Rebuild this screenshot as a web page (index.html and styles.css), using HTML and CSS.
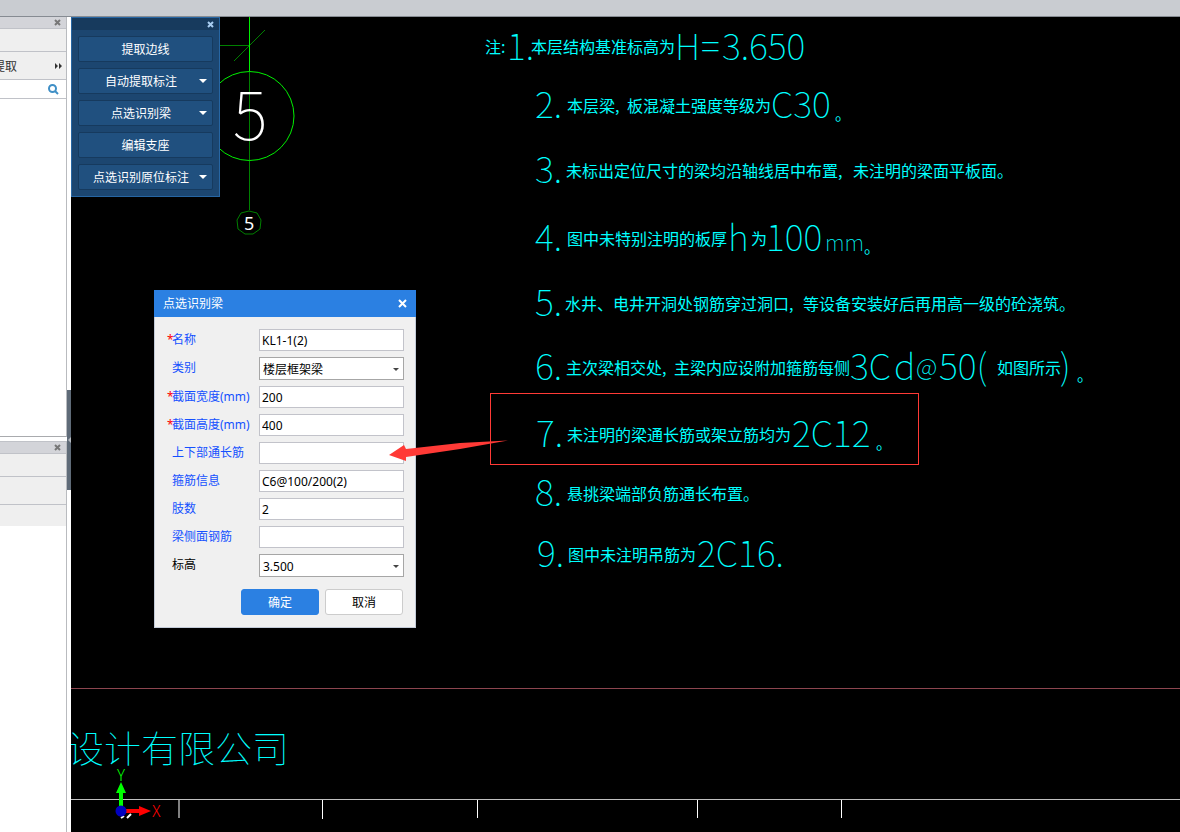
FILE: index.html
```html
<!DOCTYPE html>
<html lang="zh-CN">
<head>
<meta charset="utf-8">
<title>点选识别梁</title>
<link rel="stylesheet" href="styles.css">
</head>
<body>
<div class="app">
  <header class="titlebar"></header>
  <main class="workspace">
    <aside class="sidebar">
      <section class="dock dock-main">
        <div class="dock-head">
          <button class="icon-btn" aria-label="关闭"><svg class="x-icon" viewBox="0 0 7 7"><path d="M1 1 6 6M6 1 1 6"/></svg></button>
        </div>
        <div class="dock-row"></div>
        <div class="dock-row dock-tools">
          <span class="dock-text">提取</span>
          <button class="icon-btn more" aria-label="更多"><svg class="more-icon" viewBox="0 0 8 6"><path d="M0 0 3 3 0 6zM4 0 7 3 4 6z"/></svg></button>
        </div>
        <div class="dock-search">
          <button class="icon-btn" aria-label="搜索"><svg class="search-icon" viewBox="0 0 11 11"><circle cx="4.5" cy="4.5" r="3.5"/><path d="M7 7 10 10"/></svg></button>
        </div>
      </section>
      <section class="dock dock-sub">
        <div class="dock-head">
          <button class="icon-btn" aria-label="关闭"><svg class="x-icon" viewBox="0 0 7 7"><path d="M1 1 6 6M6 1 1 6"/></svg></button>
        </div>
        <div class="dock-row"></div>
        <div class="dock-row dock-tools"></div>
        <div class="dock-row dock-last"></div>
      </section>
      <div class="splitter"><svg class="grip" viewBox="0 0 3 6"><path d="M3 0 0 3 3 6z"/></svg></div>
    </aside>

    <div class="canvas">
      <svg class="drawing">
        <g transform="translate(-71 -17)">
          <g class="axis-dark">
            <path d="M219 45.500H249M234 61 265 30M249.500 71V210"/>
            <path d="M249 211 257 213 261 220 260 229 253 234 245 234 238 229 237 220 241 213z"/>
          </g>
          <g class="axis-bright">
            <path d="M249.500 17V71"/>
            <circle cx="249.500" cy="116" r="44.500"/>
          </g>
          <text class="mark-big" x="233" y="140">5</text>
          <text class="mark-small" x="244" y="230">5</text>

          <g class="cjk">
            <text x="485" y="53">注</text>
            <text x="501" y="53">:</text>
            <text x="531" y="53">本层结构基准标高为</text>
            <text x="567" y="112">本层梁,</text>
            <text x="627" y="112">板混凝土强度等级为</text>
            <text x="835" y="120">。</text>
            <text x="566" y="177">未标出定位尺寸的梁均沿轴线居中布置,</text>
            <text x="853" y="177">未注明的梁面平板面。</text>
            <text x="567" y="245">图中未特别注明的板厚</text>
            <text x="751" y="245">为</text>
            <text x="864" y="253">。</text>
            <text x="565" y="310">水井、电井开洞处钢筋穿过洞口,</text>
            <text x="803" y="310">等设备安装好后再用高一级的砼浇筑。</text>
            <text x="566" y="374">主次梁相交处,</text>
            <text x="674" y="374">主梁内应设附加箍筋每侧</text>
            <text x="997" y="374">如图所示</text>
            <text x="1077" y="381">。</text>
            <text x="567" y="441">未注明的梁通长筋或架立筋均为</text>
            <text x="876" y="449">。</text>
            <text x="567" y="500">悬挑梁端部负筋通长布置。</text>
            <text x="568" y="561">图中未注明吊筋为</text>
          </g>
          <g class="latin">
            <text x="507" y="60">1.</text>
            <text x="675" y="60">H</text>
            <text x="701" y="60">=</text>
            <text x="722" y="60">3.650</text>
            <text x="535" y="118">2.</text>
            <text x="771" y="118">C30</text>
            <text x="535" y="183">3.</text>
            <text x="535" y="251">4.</text>
            <text x="728" y="251">h</text>
            <text x="766" y="251">100</text>
            <text class="lower" x="825" y="251">mm</text>
            <text x="535" y="316">5.</text>
            <text x="535" y="380">6.</text>
            <text x="850" y="380">3C</text>
            <text x="894" y="380">d</text>
            <text class="at" x="916" y="376">@</text>
            <text x="939" y="380">50(</text>
            <text x="1060" y="380">)</text>
            <text x="536" y="447">7.</text>
            <text x="792" y="447">2C12</text>
            <text x="535" y="506">8.</text>
            <text x="537" y="567">9.</text>
            <text x="697" y="567">2C16.</text>
          </g>
          <text class="company" x="67" y="763">设计有限公司</text>

          <path class="red-dim" d="M71 688.500H4000"/>
          <path class="frame" d="M71 799.500H4000"/>
          <path class="tick-dim" d="M179 800V818"/>
          <path class="tick" d="M322.500 800V819M477.500 800V818M697.500 800V818M841.500 800V818"/>
          <path class="tick-bits" d="M121 818 124 816M127 818 131 814"/>
          <path class="arrow-y" d="M119 806V793H116L121 782 126 793H123V806z"/>
          <path class="arrow-x" d="M125 809H139V806L151 811 139 816V813H125z"/>
          <circle class="origin" cx="121" cy="811" r="5.500"/>
          <text class="label-y" x="117" y="781">Y</text>
          <text class="label-x" x="152" y="817">X</text>
        </g>
      </svg>

      <section class="palette">
        <div class="palette-head">
          <button class="icon-btn" aria-label="关闭"><svg class="x-icon" viewBox="0 0 7 7"><path d="M1 1 6 6M6 1 1 6"/></svg></button>
        </div>
        <div class="palette-body">
          <button class="tool">提取边线</button>
          <button class="tool tool-menu">自动提取标注</button>
          <button class="tool tool-menu">点选识别梁</button>
          <button class="tool">编辑支座</button>
          <button class="tool tool-menu">点选识别原位标注</button>
        </div>
      </section>

      <form class="dialog" onsubmit="return false">
        <div class="dialog-head">
          <span>点选识别梁</span>
          <button type="button" class="icon-btn" aria-label="关闭"><svg class="close-icon" viewBox="0 0 9 9"><path d="M1 1 8 8M8 1 1 8"/></svg></button>
        </div>
        <div class="fields">
          <label for="f-name"><span class="req">*</span>名称</label>
          <input id="f-name" type="text" value="KL1-1(2)">
          <label for="f-type"><span class="req"></span>类别</label>
          <div class="select-box"><select id="f-type"><option>楼层框架梁</option></select></div>
          <label for="f-width"><span class="req">*</span>截面宽度(mm)</label>
          <input id="f-width" type="text" value="200">
          <label for="f-height"><span class="req">*</span>截面高度(mm)</label>
          <input id="f-height" type="text" value="400">
          <label for="f-through"><span class="req"></span>上下部通长筋</label>
          <input id="f-through" type="text">
          <label for="f-stirrup"><span class="req"></span>箍筋信息</label>
          <input id="f-stirrup" type="text" value="C6@100/200(2)">
          <label for="f-legs"><span class="req"></span>肢数</label>
          <input id="f-legs" type="text" value="2">
          <label for="f-side"><span class="req"></span>梁侧面钢筋</label>
          <input id="f-side" type="text">
          <label class="plain" for="f-level"><span class="req"></span>标高</label>
          <div class="select-box"><select id="f-level"><option>3.500</option></select></div>
        </div>
        <div class="actions">
          <button type="submit" class="btn btn-primary">确定</button>
          <button type="button" class="btn">取消</button>
        </div>
      </form>

      <svg class="markup">
        <g transform="translate(-71 -17)">
          <rect x="490.500" y="393.500" width="428" height="71"/>
          <path d="M389 455 404 445 406 449 460 443 508 440.500 460 449 406 457 406 461z"/>
        </g>
      </svg>
    </div>
  </main>
</div>
</body>
</html>
```
FILE: styles.css
```css
* { box-sizing: border-box; }

body {
  margin: 0;
  font: 12px/16px "Noto Sans", "Noto Sans CJK SC", sans-serif;
  color: #000;
}

button, input, select { font: inherit; color: inherit; }

.app {
  display: flex;
  flex-direction: column;
  height: 100vh;
  background: #fff;
}

.titlebar {
  flex: none;
  height: 17px;
  background: #c9ccd1;
  border-bottom: 1px solid #868b92;
}

.workspace { flex: 1; display: flex; min-height: 0; }

/* Left docks */
.sidebar {
  position: relative;
  flex: none;
  display: flex;
  flex-direction: column;
  gap: 4px;
  width: 71px;
  padding-right: 4px;
}

.dock { border-right: 1px solid #b9bbbf; }
.dock-main { height: 420px; border-bottom: 1px solid #a9abae; }
.dock-sub { flex: 1; border-top: 1px solid #c0c2c8; }

.dock-head {
  display: flex;
  align-items: center;
  justify-content: flex-end;
  height: 12px;
  padding-right: 5px;
  background: #d3d4d9;
  border-bottom: 1px solid #c0c2c8;
}

.dock-row {
  display: flex;
  align-items: center;
  justify-content: space-between;
  height: 23px;
  background: #efefef;
  border-bottom: 1px solid #c0c2c8;
}
.dock-tools { height: 28px; padding-right: 3px; }
.dock-last { height: 21px; border-bottom: 0; }

.dock-text {
  display: flex;
  justify-content: flex-end;
  width: 17px;
  padding-top: 2px;
  overflow: hidden;
  white-space: nowrap;
  color: #333;
}

.dock-search {
  display: flex;
  align-items: center;
  justify-content: flex-end;
  height: 19px;
  padding-right: 7px;
  border-bottom: 1px solid #c0c2c8;
}

.icon-btn {
  display: flex;
  padding: 0;
  border: 0;
  background: none;
}

.x-icon { width: 7px; height: 7px; fill: none; stroke: #777; stroke-width: 2; }
.more-icon { width: 8px; height: 6px; fill: #333; }
.search-icon { width: 11px; height: 11px; fill: none; stroke: #3f8fc6; stroke-width: 2; }

.splitter {
  position: absolute;
  right: 0;
  top: 373px;
  display: flex;
  align-items: center;
  justify-content: flex-end;
  width: 4px;
  height: 100px;
  background: #5f6b78;
}
.grip { width: 3px; height: 6px; fill: #b5bac0; }

/* Drawing area */
.canvas { position: relative; flex: 1; overflow: hidden; background: #000; }

.drawing, .markup {
  position: absolute;
  inset: 0;
  width: 100%;
  height: 100%;
}
.markup { pointer-events: none; }
.markup rect { fill: none; stroke: #ff3a36; }
.markup path { fill: #ff3a36; }

.drawing text { font-family: "Noto Sans CJK SC", sans-serif; }
.axis-dark { fill: none; stroke: #008000; }
.axis-bright { fill: none; stroke: #00f000; }
.mark-big { font-size: 66px; font-weight: 100; fill: #fff; }
.drawing .mark-small { font-family: "Noto Sans", sans-serif; font-size: 18px; fill: #fff; }
.cjk { font-size: 16px; font-weight: 400; fill: #0ff; }
.latin { font-size: 36px; font-weight: 100; fill: #0ff; }
.lower { font-size: 22px; }
.at { font-size: 24px; }
.company { font-size: 37px; font-weight: 100; fill: #0ff; }
.red-dim { stroke: #8c454f; }
.frame { stroke: #c0c0c0; }
.tick { stroke: #fff; }
.tick-dim { stroke: #808080; stroke-width: 2; }
.tick-bits { stroke: #fff; stroke-width: 2; }
.arrow-y { fill: #0f0; }
.arrow-x { fill: #f00; }
.origin { fill: #0000c0; }
.drawing .label-y { font-size: 16px; font-weight: 300; fill: #0f0; }
.drawing .label-x { font-size: 16px; font-weight: 300; fill: #f00; }

/* Floating tool palette */
.palette {
  position: absolute;
  left: 0;
  top: 0;
  width: 149px;
  border: 1px solid #2766a3;
  background: #1c4670;
}
.palette-head {
  display: flex;
  align-items: center;
  justify-content: flex-end;
  height: 12px;
  padding-right: 5px;
  background: #173a5d;
}
.palette .x-icon { stroke: #a9cdf0; }
.palette-body {
  display: flex;
  flex-direction: column;
  gap: 6px;
  padding: 6px;
}
.tool {
  position: relative;
  height: 26px;
  padding: 2px 0 0;
  border: 1px solid #163a5e;
  border-radius: 2px;
  background: #20507f;
  color: #fff;
}
.tool-menu { padding-right: 9px; }
.tool-menu::after {
  content: "";
  position: absolute;
  right: 5px;
  top: 10px;
  border: 4px solid transparent;
  border-top-color: #fff;
  border-bottom: 0;
}

/* Beam dialog */
.dialog {
  position: absolute;
  left: 83px;
  top: 273px;
  width: 262px;
  border: 1px solid #c3cbd8;
  border-top: 0;
  background: #f0f0f0;
}
.dialog-head {
  display: flex;
  align-items: center;
  justify-content: space-between;
  height: 27px;
  margin: 0 -1px;
  padding: 0 9px;
  background: #2b80e2;
  color: #fff;
}
.close-icon { width: 9px; height: 9px; fill: none; stroke: #fff; stroke-width: 2; }

.fields {
  display: grid;
  grid-template-columns: 1fr 145px;
  row-gap: 6px;
  padding: 12px 11px 0 12px;
}
.fields label {
  display: flex;
  height: 22px;
  line-height: 22px;
  color: #1450ff;
  white-space: nowrap;
}
.fields .plain { color: #000; }
.req { flex: none; width: 5px; color: #f00; }

.fields input {
  width: 100%;
  height: 22px;
  padding: 1px 2px 0;
  border: 1px solid #c2c3ca;
  border-radius: 0;
  background: #fff;
}
.select-box { position: relative; }
.select-box::after {
  content: "";
  position: absolute;
  right: 5px;
  top: 11px;
  border: 3px solid transparent;
  border-top-color: #444;
  border-bottom: 0;
}
.fields select {
  display: block;
  appearance: none;
  width: 100%;
  height: 23px;
  padding: 2px 3px 0;
  border: 1px solid #a6a6a6;
  border-radius: 0;
  background: #fff;
}

.actions {
  display: flex;
  justify-content: flex-end;
  gap: 6px;
  padding: 12px 12px 12px;
}
.btn {
  width: 78px;
  height: 26px;
  padding: 2px 0 0;
  border: 1px solid #ccc;
  border-radius: 3px;
  background: #fff;
}
.btn-primary { border-color: #2b80e2; background: #2b80e2; color: #fff; }
```
